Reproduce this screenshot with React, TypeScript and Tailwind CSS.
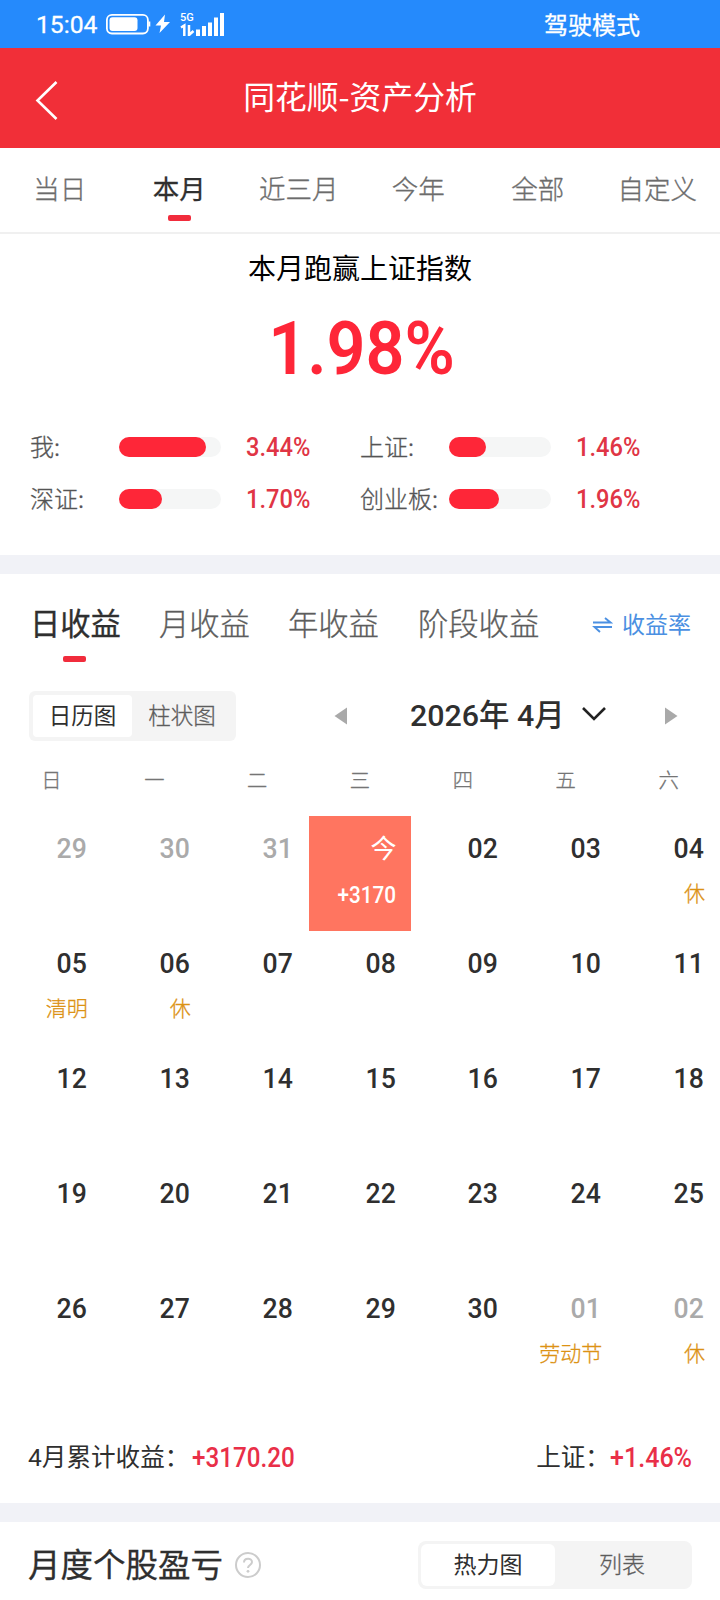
import React from "react";

const CJK = "font-['Noto_Sans_CJK_SC',sans-serif]";
const NUM = "font-['Roboto','Noto_Sans_CJK_SC',sans-serif]";
const SOFT = "font-light [-webkit-text-stroke:0.3px_currentColor]";
const STRONG = "font-normal [-webkit-text-stroke:0.3px_currentColor]";

const periods = ["当日", "本月", "近三月", "今年", "全部", "自定义"];

const indexes = [
  { label: "我:", fill: 87, value: "3.44%" },
  { label: "上证:", fill: 37, value: "1.46%" },
  { label: "深证:", fill: 43, value: "1.70%" },
  { label: "创业板:", fill: 50, value: "1.96%" },
];

const weekdays = ["日", "一", "二", "三", "四", "五", "六"];

type Day = { d: string; muted?: boolean; note?: string; today?: boolean };

const days: Day[] = [
  { d: "29", muted: true },
  { d: "30", muted: true },
  { d: "31", muted: true },
  { d: "今", today: true, note: "+3170" },
  ...Array.from({ length: 29 }, (_, i) => {
    const d = String(i + 2).padStart(2, "0");
    const notes: Record<string, string> = { "04": "休", "05": "清明", "06": "休" };
    return { d, note: notes[d] };
  }),
  { d: "01", muted: true, note: "劳动节" },
  { d: "02", muted: true, note: "休" },
];

function StatusBar() {
  return (
    <div className="flex h-12 items-center bg-[#258afc] text-white">
      <span className={`${NUM} ml-[36px] w-[63px] pt-[2px] text-[24.700px] leading-[50px] font-normal [-webkit-text-stroke:0.3px_currentColor]`}>15:04</span>
      <svg className="ml-[6px]" width="120" height="26" viewBox="0 0 120 26">
        <rect x="1.900" y="3.900" width="41" height="18.600" rx="5" fill="none" stroke="#fff" strokeWidth="1.800" />
        <rect x="4.500" y="6.300" width="28" height="13.600" rx="3" fill="#fff" />
        <path d="M44.300 10.500v5" stroke="#fff" strokeWidth="2" />
        <path d="M60 3.500 50.500 14.500h5.500l-1.500 7.500L65 11h-6z" fill="#fff" />
        <text x="75" y="9.800" fontSize="11" fontFamily="Roboto" fontWeight="500" fill="#fff">5G</text>
        <path d="M76 16.500l3.300-2V25M84 14V25M84.500 23.500l4-3.500" fill="none" stroke="#fff" strokeWidth="2.500" />
        <path d="M93 18.500v6.500M99 15V25M105 11.500v13.500M111 6.500v18.500M117 2v23" stroke="#fff" strokeWidth="4" />
      </svg>
      <span className={`${STRONG} ml-auto mr-[80px] text-[24px] leading-[48px]`}>驾驶模式</span>
    </div>
  );
}

export default function App() {
  return (
    <div className={`${CJK} flex h-[1600px] w-[720px] flex-col overflow-hidden bg-white text-[#2f2f2f]`}>
      <StatusBar />

      <header className="grid h-[100px] grid-cols-[92px_1fr_92px] items-center bg-[#f12f38] text-white">
        <svg className="mt-[4px] ml-[34px]" width="26" height="42" viewBox="0 0 26 42">
          <path d="M22.500 3 3.500 21.500l19 18.500" fill="none" stroke="#fff" strokeWidth="2.600" />
        </svg>
        <h1 className="pb-[5px] text-center text-[31.800px]">同花顺-资产分析</h1>
      </header>

      <nav className="grid h-[86px] shrink-0 grid-cols-6 border-b-2 border-[#f0f0f0] pr-[3px]">
        {periods.map((p, i) => (
          <div key={p} className="flex flex-col items-center">
            <span className={`mt-[20px] text-[26.500px] leading-[40px] whitespace-nowrap ${i === 1 ? STRONG : `${SOFT} text-[#6c6c6c]`}`}>{p}</span>
            {i === 1 && <i className="mt-[7px] h-[6px] w-[23px] rounded-[2px] bg-[#f12c3c]" />}
          </div>
        ))}
      </nav>

      <section className="h-[321px] shrink-0">
        <h2 className="pt-[13px] text-center text-[28px] leading-[40px] text-black">本月跑赢上证指数</h2>
        <div className="flex h-[134px] justify-center pt-[21px] pl-[3px]">
          <span className={`${NUM} scale-x-[0.91] text-[75px] leading-[80px] font-semibold text-[#fe2638]`}>1.98%</span>
        </div>
        <div className="grid grid-cols-[330px_1fr] pl-[30px]">
          {indexes.map((x) => (
            <div key={x.label} className="flex h-[52px] items-center">
              <span className={`${SOFT} w-[89px] pb-[3px] text-[24px] whitespace-nowrap text-[#555]`}>{x.label}</span>
              <span className="h-5 w-[102px] rounded-full bg-[#f5f6f6]">
                <i className="block h-5 rounded-full bg-[#fe2638]" style={{ width: x.fill }} />
              </span>
              <span className={`${NUM} ml-[25px] origin-left scale-x-[0.91] text-[26px] font-medium text-[#e03545]`}>{x.value}</span>
            </div>
          ))}
        </div>
      </section>

      <div className="h-[19px] shrink-0 bg-[#f1f2f7]" />

      <section className="flex h-[929px] shrink-0 flex-col">
        <div className="flex h-[104px] items-start pt-[26px] pl-[30px] text-[30.300px] leading-[44px]">
          <div className="flex w-[129px] flex-col">
            <span className={STRONG}>日收益</span>
            <i className="mt-[12px] ml-[33px] h-[6px] w-[23px] rounded-[2px] bg-[#f12c3c]" />
          </div>
          <span className={`${SOFT} w-[129px] text-[#5c5c5c]`}>月收益</span>
          <span className={`${SOFT} w-[130px] text-[#5c5c5c]`}>年收益</span>
          <span className={`${SOFT} text-[#5c5c5c]`}>阶段收益</span>
          <div className="mr-[29px] ml-auto flex items-center gap-[9px] pt-[1px] text-[23px] text-[#4b90e2]">
            <svg className="mt-[3px]" width="21" height="18" viewBox="0 0 21 18">
              <path d="M1 6.500h17.500L13 2M20 11H2.500L8 16" fill="none" stroke="currentColor" strokeWidth="1.900" />
            </svg>
            <span>收益率</span>
          </div>
        </div>

        <div className="flex h-[86px] items-center pb-[10px] pl-[29px]">
          <div className="flex h-[50px] w-[207px] rounded-md bg-[#f4f4f4] p-1 text-center text-[22.500px]">
            <span className="h-[42px] w-[99px] rounded bg-white leading-[38px]">日历图</span>
            <span className={`${SOFT} flex-1 leading-[38px] text-[#5c5c5c]`}>柱状图</span>
          </div>
          <svg className="ml-[98px]" width="14" height="18" viewBox="0 0 14 18"><path d="M13 .500v17L.500 9z" fill="#a9a9a9" /></svg>
          <span className={`${NUM} ml-[62px] w-[155px] text-[30.400px] font-medium whitespace-nowrap`}>2026年 4月</span>
          <svg className="mb-[4px] ml-[16px]" width="26" height="18" viewBox="0 0 26 18"><path d="M2 3l11 11L24 3" fill="none" stroke="#222" strokeWidth="2.600" /></svg>
          <svg className="ml-[57px]" width="14" height="18" viewBox="0 0 14 18"><path d="M1 .500v17L13.500 9z" fill="#a9a9a9" /></svg>
        </div>

        <div className={`${SOFT} grid h-[52px] grid-cols-7 text-center text-[20.300px] leading-[30px] text-[#757575]`}>
          {weekdays.map((w) => <span key={w}>{w}</span>)}
        </div>

        <div className="grid grid-cols-7">
          {days.map((x, i) => (
            <div
              key={i}
              className={`flex h-[115px] flex-col items-end pt-[13px] pr-[15px] ${x.today ? "bg-[#ff7560] text-white" : ""}`}
            >
              <span className={`${NUM} leading-[40px] ${x.today ? "text-[26px]" : "mr-[1px] origin-right scale-x-[0.95] text-[28px] font-medium"} ${x.muted ? "text-[#aaa]" : ""}`}>{x.d}</span>
              {x.today ? (
                <span className={`${NUM} mt-[7px] origin-right scale-x-[0.9] text-[23px] leading-[40px] font-medium`}>{x.note}</span>
              ) : (
                <span className={`${SOFT} mt-[3px] text-[21px] leading-[40px] text-[#dc9214]`}>{x.note}</span>
              )}
            </div>
          ))}
        </div>

        <div className="flex items-center justify-between pt-[47px] pr-[28px] pl-[28px] text-[24.600px] leading-[40px]">
          <div className="flex">
            <span className={NUM}>4月累计收益：</span>
            <span className={`${NUM} ml-[3px] origin-left scale-x-[0.88] text-[27.500px] font-medium text-[#e92f48]`}>+3170.20</span>
          </div>
          <div className="flex">
            <span className={`${NUM} mr-[-8px]`}>上证：</span>
            <span className={`${NUM} origin-right scale-x-[0.91] text-[27.500px] font-medium text-[#e92f48]`}>+1.46%</span>
          </div>
        </div>
      </section>

      <div className="h-[19px] shrink-0 bg-[#f1f2f7]" />

      <section className="flex h-[78px] shrink-0 items-start pl-[28px]">
        <h3 className={`${STRONG} mt-[17px] text-[32.500px] leading-[48px]`}>月度个股盈亏</h3>
        <svg className="mt-[29px] ml-[11px]" width="28" height="28" viewBox="0 0 28 28">
          <circle cx="14" cy="14" r="12" fill="none" stroke="#ccc" strokeWidth="2" />
          <path d="M10 11.500c0-5 8-5 8-.500 0 3-4 3-4 6" fill="none" stroke="#ccc" strokeWidth="2" />
          <circle cx="14" cy="20.300" r="1.400" fill="#ccc" />
        </svg>
        <div className="mt-[19px] mr-[28px] ml-auto flex h-[48px] w-[274px] rounded-lg bg-[#f4f4f4] p-[3px] text-center text-[23px] leading-[38px]">
          <span className="w-[134px] rounded-md bg-white">热力图</span>
          <span className={`${SOFT} flex-1 text-[#5c5c5c]`}>列表</span>
        </div>
      </section>
    </div>
  );
}
